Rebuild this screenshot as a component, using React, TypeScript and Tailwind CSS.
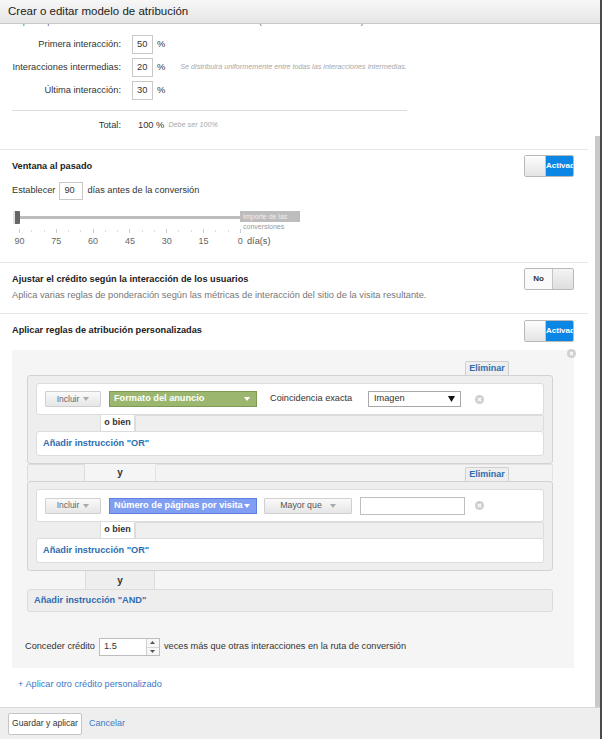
import React from "react";

// pequeño icono circular "x" gris
function CloseDot() {
  return (
    <svg width="9" height="9" viewBox="0 0 10 10" className="shrink-0">
      <circle cx="5" cy="5" r="5" fill="#cfcfcf" />
      <path d="M3.2 3.2 L6.8 6.8 M6.8 3.2 L3.2 6.8" stroke="#fff" strokeWidth="1.3" />
    </svg>
  );
}

function Caret({ color = "#999" }: { color?: string }) {
  return (
    <svg width="6" height="4" viewBox="0 0 6 4" className="shrink-0">
      <path d="M0 0 L6 0 L3 4 Z" fill={color} />
    </svg>
  );
}

function Toggle({ on }: { on: boolean }) {
  if (on) {
    return (
      <div className="flex h-[22px] w-[50px] shrink-0 overflow-hidden rounded-[2px] border border-[#b9b9b9]">
        <div className="w-[21px] border-r border-[#c4c4c4] bg-gradient-to-b from-[#fdfdfd] to-[#e4e4e4]" />
        <div className="flex flex-1 items-center overflow-hidden whitespace-nowrap bg-[#0c86e4] text-[8px] font-bold text-white">
          Activado
        </div>
      </div>
    );
  }
  return (
    <div className="flex h-[22px] w-[50px] shrink-0 overflow-hidden rounded-[2px] border border-[#b9b9b9]">
      <div className="flex flex-1 items-center justify-center bg-[#fafafa] text-[8px] font-bold text-[#333]">No</div>
      <div className="w-[21px] border-l border-[#c4c4c4] bg-gradient-to-b from-[#f4f4f4] to-[#dedede]" />
    </div>
  );
}

function PctRow({ label, value, hint }: { label: string; value: string; hint?: string }) {
  return (
    <div className="flex h-[23px] items-center text-[9.3px] text-[#333]">
      <span className="w-[121px] text-right">{label}</span>
      <span className="ml-[11px] flex h-[19px] w-[21px] items-center border border-[#c8c8c8] pl-[4px]">{value}</span>
      <span className="ml-[4px]">%</span>
      {hint && <span className="ml-[15px] text-[7.2px] italic text-[#a8a8a8]">{hint}</span>}
    </div>
  );
}

function Slider() {
  const majors = [0, 1, 2, 3, 4, 5, 6];
  const labels = ["90", "75", "60", "45", "30", "15", "0"];
  const step = 36.8;
  return (
    <div className="relative mt-[7px] h-[46px] w-[300px]">
      <div className="absolute left-[5px] top-[9px] h-[3px] w-[224px] bg-[#bdbdbd]" />
      <div className="absolute left-[1px] top-[4px] h-[13px] w-[7px] rounded-[1px] border-l-2 border-[#e4e4e4] bg-[#666]" />
      <div className="absolute left-[228px] top-[4px] h-[11px] w-[60px] bg-[#bdbdbd] pl-[3px] text-[7px] leading-[11px] text-[#eee]">
        Importe de las
      </div>
      <div className="absolute left-[231px] top-[15px] text-[7px] leading-[10px] text-[#9a9a9a]">conversiones</div>
      {majors.map((i) => (
        <React.Fragment key={i}>
          <div className="absolute top-[22px] h-[4px] w-px bg-[#ccc]" style={{ left: 7 + i * step }} />
          {i < 6 && (
            <>
              <div className="absolute top-[23px] h-[2px] w-px bg-[#ddd]" style={{ left: 7 + i * step + step / 3 }} />
              <div className="absolute top-[23px] h-[2px] w-px bg-[#ddd]" style={{ left: 7 + i * step + (2 * step) / 3 }} />
            </>
          )}
          <div
            className="absolute top-[28px] -translate-x-1/2 text-[9px] leading-[12px] text-[#666]"
            style={{ left: 7.5 + i * step }}
          >
            {labels[i]}
          </div>
        </React.Fragment>
      ))}
      <div className="absolute left-[235px] top-[28px] text-[9.2px] leading-[12px] text-[#555]">día(s)</div>
    </div>
  );
}

function Incluir() {
  return (
    <div className="flex h-[16px] w-[56px] shrink-0 items-center justify-center gap-[4px] rounded-[1px] border border-[#cfcfcf] bg-gradient-to-b from-[#fafafa] to-[#e6e6e6] text-[8.5px] text-[#666]">
      Incluir <Caret color="#aaa" />
    </div>
  );
}

function OrPart() {
  return (
    <>
      <div className="flex h-[16px]">
        <div className="w-[64px]" />
        <div className="flex w-[35px] items-center justify-center border-x border-[#dcdcdc] bg-white text-[9px] font-bold text-[#333]">
          o bien
        </div>
        <div className="flex-1 rounded-t-[2px] border-x border-t border-[#dcdcdc] bg-[#efefef]" />
      </div>
      <div className="flex h-[25px] items-center rounded-[3px] border border-[#dcdcdc] bg-white pl-[6px] text-[9.2px] font-bold text-[#2f6cae]">
        Añadir instrucción "OR"
      </div>
    </>
  );
}

function Eliminar() {
  return (
    <div className="flex h-[14px] w-[44px] items-center justify-center rounded-t-[2px] border-x border-t border-[#cfcfcf] bg-[#eeeeee] text-[9px] font-bold text-[#2f6cae]">
      Eliminar
    </div>
  );
}

export default function App() {
  return (
    <div className="flex h-[739px] w-[602px] flex-col overflow-hidden border-r-2 border-[#4a4a4a] bg-white font-['Liberation_Sans',Arial,sans-serif] text-[#333]">
      <header className="flex h-[24px] shrink-0 items-center border-b border-[#c8c8c8] bg-gradient-to-b from-[#f7f7f7] to-[#e5e5e5] pl-[8px] text-[11.5px] text-[#222]">
        Crear o editar modelo de atribución
      </header>

      <div className="flex min-h-0 flex-1">
        <div className="w-[588px] shrink-0 overflow-hidden">
          {/* fila cortada por el scroll */}
          <div className="h-[4px] overflow-hidden pl-[12px]">
            <div className="-mt-[9px] text-[9.2px] leading-[12px] text-[#666]">
              Especifique cómo distribuir el crédito entre las interacciones (la suma debe ser 100 %).
            </div>
          </div>

          <div className="pt-[5px]">
            <PctRow label="Primera interacción:" value="50" />
            <PctRow
              label="Interacciones intermedias:"
              value="20"
              hint="Se distribuirá uniformemente entre todas las interacciones intermedias."
            />
            <PctRow label="Última interacción:" value="30" />
            <div className="ml-[12px] mt-[8px] h-px w-[395px] bg-[#dcdcdc]" />
            <div className="mt-[3px] flex h-[23px] items-center text-[9.3px]">
              <span className="w-[121px] text-right">Total:</span>
              <span className="ml-[17px]">100 %</span>
              <span className="ml-[4px] text-[7.2px] italic text-[#a8a8a8]">Debe ser 100%</span>
            </div>
          </div>

          {/* Ventana al pasado */}
          <div className="mt-[12px] flex h-[113px] border-t border-[#e6e6e6] pl-[12px] pr-[14px]">
            <div className="flex-1 pt-[10px]">
              <div className="text-[9.2px] font-bold leading-[12px] text-[#222]">Ventana al pasado</div>
              <div className="mt-[10px] flex h-[18px] items-center text-[9.2px]">
                <span>Establecer</span>
                <span className="ml-[4px] flex h-[18px] w-[24px] items-center border border-[#c8c8c8] pl-[4px]">90</span>
                <span className="ml-[4px]">días antes de la conversión</span>
              </div>
              <Slider />
            </div>
            <div className="mt-[5px]">
              <Toggle on />
            </div>
          </div>

          {/* Ajustar crédito */}
          <div className="flex h-[51px] border-t border-[#e6e6e6] pl-[12px] pr-[14px]">
            <div className="flex-1 pt-[10px]">
              <div className="text-[9.2px] font-bold leading-[12px] text-[#222]">
                Ajustar el crédito según la interacción de los usuarios
              </div>
              <div className="mt-[4px] text-[9.3px] leading-[12px] text-[#777]">
                Aplica varias reglas de ponderación según las métricas de interacción del sitio de la visita resultante.
              </div>
            </div>
            <div className="mt-[5px]">
              <Toggle on={false} />
            </div>
          </div>

          {/* Reglas personalizadas */}
          <div className="border-t border-[#e6e6e6]">
            <div className="flex items-start pl-[12px] pr-[14px]">
              <div className="flex-1 pt-[10px] text-[9.2px] font-bold leading-[12px] text-[#222]">
                Aplicar reglas de atribución personalizadas
              </div>
              <div className="mt-[6px]">
                <Toggle on />
              </div>
            </div>

            <div className="relative ml-[12px] mt-[8px] w-[562px] bg-[#f5f5f5] pb-[12px] pl-[15px] pr-[21px] pt-[11px]">
              <div className="absolute right-[-2px] top-[-1px]">
                <CloseDot />
              </div>

              <div className="flex justify-end pr-[44px]">
                <Eliminar />
              </div>

              {/* grupo 1 */}
              <div className="rounded-[3px] border border-[#d2d2d2] bg-[#eeeeee] px-[8px] py-[7px]">
                <div className="flex h-[32px] items-center rounded-[3px] border border-[#dcdcdc] bg-white pl-[8px] text-[9.2px]">
                  <Incluir />
                  <div className="ml-[8px] flex h-[16px] w-[148px] items-center justify-between border border-[#7d9a52] bg-[#9bb66f] pl-[4px] pr-[6px] text-[9.2px] font-bold text-white">
                    Formato del anuncio <Caret color="#fff" />
                  </div>
                  <span className="ml-[13px] w-[98px]">Coincidencia exacta</span>
                  <div className="flex h-[16px] w-[93px] items-center justify-between border border-[#a9a9a9] bg-white pl-[5px] pr-[5px]">
                    Imagen
                    <svg width="7" height="6" viewBox="0 0 7 6">
                      <path d="M0 0 L7 0 L3.5 6 Z" fill="#111" />
                    </svg>
                  </div>
                  <div className="ml-[14px]">
                    <CloseDot />
                  </div>
                </div>
                <OrPart />
              </div>

              {/* conector y */}
              <div className="flex h-[17px]">
                <div className="w-[58px] rounded-t-[2px] border-x border-t border-[#dcdcdc] bg-[#f1f1f1]" />
                <div className="flex w-[70px] items-center justify-center text-[10px] font-bold text-[#333]">y</div>
                <div className="flex flex-1 items-end justify-end rounded-t-[2px] border-x border-t border-[#e2e2e2] bg-[#f3f3f3] pr-[43px]">
                  <Eliminar />
                </div>
              </div>

              {/* grupo 2 */}
              <div className="rounded-[3px] border border-[#d2d2d2] bg-[#eeeeee] px-[8px] py-[7px]">
                <div className="flex h-[33px] items-center rounded-[3px] border border-[#dcdcdc] bg-white pl-[8px] text-[9.2px]">
                  <Incluir />
                  <div className="ml-[8px] flex h-[16px] w-[148px] items-center overflow-hidden border border-[#5f80e0] bg-[#809ff3] pl-[4px] text-[9.2px] font-bold whitespace-nowrap text-white">
                    Número de páginas por visita
                    <span className="ml-[1px]">
                      <Caret color="#fff" />
                    </span>
                  </div>
                  <div className="ml-[7px] flex h-[16px] w-[88px] items-center justify-center gap-[8px] rounded-[1px] border border-[#cfcfcf] bg-gradient-to-b from-[#fafafa] to-[#e6e6e6] text-[8.8px] text-[#555]">
                    Mayor que <Caret color="#aaa" />
                  </div>
                  <div className="ml-[8px] h-[18px] w-[105px] border border-[#bdbdbd] bg-white" />
                  <div className="ml-[10px]">
                    <CloseDot />
                  </div>
                </div>
                <OrPart />
              </div>

              {/* conector y (AND) */}
              <div className="flex h-[18px]">
                <div className="w-[58px]" />
                <div className="flex w-[70px] items-center justify-center border-x border-[#dcdcdc] bg-[#eeeeee] text-[10px] font-bold text-[#333]">
                  y
                </div>
              </div>
              <div className="flex h-[23px] items-center rounded-[3px] border border-[#dcdcdc] bg-[#eeeeee] pl-[6px] text-[9.2px] font-bold text-[#2f6cae]">
                Añadir instrucción "AND"
              </div>

              <div className="-ml-[2px] mt-[26px] flex h-[18px] items-center text-[9.2px] text-[#333]">
                <span>Conceder crédito</span>
                <div className="ml-[4px] flex h-[18px] w-[61px] border border-[#bdbdbd] bg-white">
                  <span className="flex flex-1 items-center pl-[4px]">1.5</span>
                  <div className="flex w-[13px] flex-col border-l border-[#cfcfcf] bg-[#f7f7f7]">
                    <div className="flex flex-1 items-center justify-center border-b border-[#d8d8d8]">
                      <svg width="5" height="3" viewBox="0 0 5 3">
                        <path d="M0 3 L5 3 L2.5 0 Z" fill="#555" />
                      </svg>
                    </div>
                    <div className="flex flex-1 items-center justify-center">
                      <svg width="5" height="3" viewBox="0 0 5 3">
                        <path d="M0 0 L5 0 L2.5 3 Z" fill="#555" />
                      </svg>
                    </div>
                  </div>
                </div>
                <span className="ml-[4px]">veces más que otras interacciones en la ruta de conversión</span>
              </div>
            </div>

            <div className="ml-[18px] mt-[10px] text-[9.2px] leading-[12px] text-[#3a7bc8]">
              + Aplicar otro crédito personalizado
            </div>
          </div>
        </div>

        {/* barra de scroll */}
        <div className="flex flex-1 justify-end">
          <div className="mt-[112px] w-[5px] bg-[#c9c9c9]" />
        </div>
      </div>

      <footer className="flex h-[32px] shrink-0 items-center border-t border-[#d8d8d8] bg-[#eeeeee] pl-[8px]">
        <button className="flex h-[22px] w-[74px] items-center justify-center rounded-[2px] border border-[#c5c5c5] bg-white text-[8.6px] text-[#333]">
          Guardar y aplicar
        </button>
        <span className="ml-[7px] text-[9px] text-[#3a7bc8]">Cancelar</span>
      </footer>
    </div>
  );
}
